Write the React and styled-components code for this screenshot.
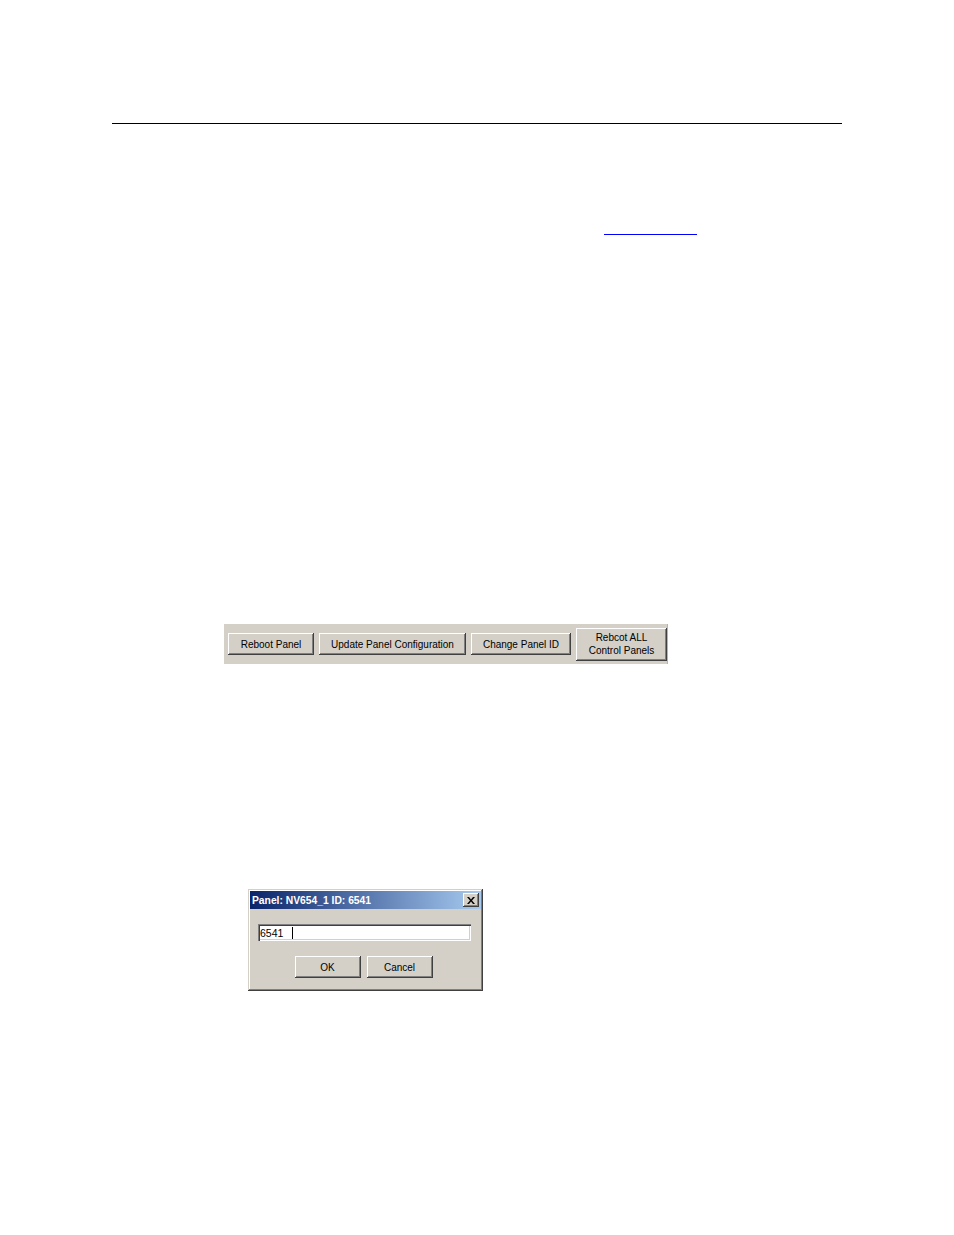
import { createGlobalStyle, styled } from "styled-components";

const GlobalStyle = createGlobalStyle`
    html, body {
        margin: 0;
        padding: 0;
        background: #ffffff;
    }
    body {
        font-family: "Liberation Sans", Arial, sans-serif;
    }
`

const bevel = `
    box-shadow: inset -1px -1px #404040, inset 1px 1px #ffffff,
        inset -2px -2px #808080, inset 2px 2px #d4d0c8;
`

const StyledPage = styled.div`
    width: 954px;
    height: 1235px;
    display: flex;
    flex-direction: column;
    .rule{
        margin: 123px 0 0 112px;
        width: 730px;
        height: 1px;
        background: #000000;
    }
    .link{
        margin: 110px 0 0 604px;
        width: 93px;
        height: 1px;
        background: #0000ff;
    }
`

const Toolbar = styled.div`
    margin: 389px 0 0 224px;
    width: 444px;
    height: 40px;
    box-sizing: border-box;
    background: #d4d0c8;
    display: flex;
    align-items: center;
    gap: 5px;
    padding: 0 2px 0 4px;
    border-right: 1px solid #b8b4ac;
`

const WinButton = styled.button`
    ${bevel}
    width: ${(p) => p.$w}px;
    height: ${(p) => p.$h || 22}px;
    flex: none;
    border: none;
    padding: 0;
    margin: 0;
    background: #d4d0c8;
    font-family: "Liberation Sans", Arial, sans-serif;
    font-size: 10px;
    line-height: 13px;
    color: #000000;
    text-align: center;
`

const Dialog = styled.div`
    margin: 225px 0 0 248px;
    width: 235px;
    height: 102px;
    box-sizing: border-box;
    background: #d4d0c8;
    box-shadow: inset -1px -1px #404040, inset 1px 1px #d4d0c8,
        inset -2px -2px #808080, inset 2px 2px #ffffff;
    padding: 2px;
    display: flex;
    flex-direction: column;
`

const TitleBar = styled.div`
    height: 18px;
    background: linear-gradient(to right, #0a246a, #a6caf0);
    display: flex;
    align-items: center;
    justify-content: space-between;
    padding: 0 2px 0 2px;
    color: #ffffff;
    font-size: 10.3px;
    font-weight: bold;
`

const CloseBox = styled.div`
    ${bevel}
    width: 16px;
    height: 14px;
    background: #d4d0c8;
    display: flex;
    align-items: center;
    justify-content: center;
`

const Body = styled.div`
    display: flex;
    flex-direction: column;
    padding: 15px 10px 0 8px;
`

const Field = styled.div`
    height: 17px;
    background: #ffffff;
    box-shadow: inset 1px 1px #808080, inset 2px 2px #404040,
        inset -1px -1px #ffffff, inset -2px -2px #d4d0c8;
    display: flex;
    align-items: center;
    padding-left: 2px;
    font-size: 10.5px;
    color: #000000;
    .caret{
        margin-left: 9px;
        width: 1px;
        height: 12px;
        background: #000000;
    }
`

const ButtonRow = styled.div`
    display: flex;
    justify-content: center;
    gap: 6px;
    margin-top: 15px;
    padding-right: 2px;
`

export default function App() {
    return <>
        <GlobalStyle />
        <StyledPage>
            <div className="rule"></div>
            <div className="link"></div>
            <Toolbar>
                <WinButton $w={86}>Reboot Panel</WinButton>
                <WinButton $w={147}>Update Panel Configuration</WinButton>
                <WinButton $w={100}>Change Panel ID</WinButton>
                <WinButton $w={91} $h={33}>Rebcot ALL<br />Control Panels</WinButton>
            </Toolbar>
            <Dialog>
                <TitleBar>
                    <span>Panel: NV654_1 ID: 6541</span>
                    <CloseBox>
                        <svg width="8" height="7" viewBox="0 0 8 7">
                            <path d="M0 0h2l2 2.5L6 0h2L5 3.5 8 7H6L4 4.5 2 7H0l3-3.5z" fill="#000" />
                        </svg>
                    </CloseBox>
                </TitleBar>
                <Body>
                    <Field>6541<span className="caret"></span></Field>
                    <ButtonRow>
                        <WinButton $w={66}>OK</WinButton>
                        <WinButton $w={66}>Cancel</WinButton>
                    </ButtonRow>
                </Body>
            </Dialog>
        </StyledPage>
    </>
}
